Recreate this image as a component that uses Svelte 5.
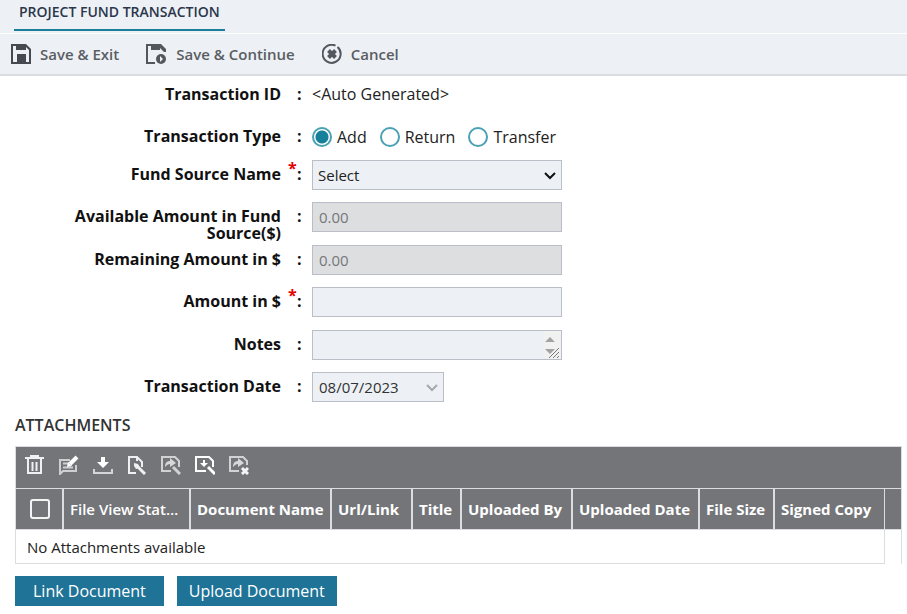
<script>
  let type = $state('Add');
  let fund = $state('Select');
  let amount = $state('');
  let notes = $state('');
  let date = $state('08/07/2023');
  const types = ['Add', 'Return', 'Transfer'];
  const columns = [
    { name: 'File View Stat…', width: 127, light: true },
    { name: 'Document Name', width: 141 },
    { name: 'Url/Link', width: 81 },
    { name: 'Title', width: 49 },
    { name: 'Uploaded By', width: 111 },
    { name: 'Uploaded Date', width: 127 },
    { name: 'File Size', width: 75 },
    { name: 'Signed Copy' }
  ];
</script>

{#snippet mark(required)}
  <span class="mark">
    <span class="star">{required ? '*' : ''}</span><span class="colon">:</span>
  </span>
{/snippet}

<div class="page">
  <header>
    <nav><a class="tab" href="#transaction">PROJECT FUND TRANSACTION</a></nav>
    <div class="actions">
      <button type="button">
        <svg width="20" height="20" viewBox="0 0 20 20">
          <path fill="#46494f" fill-rule="evenodd" d="M0 0h15l5 5v13h1v2H0zM2 2v16h4v-8h9v8h3V6l-3-3v3H5V2z" />
          <path fill="#46494f" fill-rule="evenodd" d="M6 10h8v9H6zM8 12v6h1v-3h3v3h1v-6z" />
        </svg>
        Save &amp; Exit
      </button>
      <button type="button">
        <svg width="21" height="20" viewBox="0 0 21 20">
          <path fill="#54575d" d="M0 0h15l5 5v3h-2L14 4v2H5V2H2v16h7v2H0z" />
          <circle cx="15" cy="15" r="5" fill="#54575d" />
          <path fill="#edf1f5" d="m14 12 3 3-3 3z" />
        </svg>
        Save &amp; Continue
      </button>
      <button type="button">
        <svg width="20" height="20" viewBox="0 0 20 20" fill="none" stroke="#54575d">
          <path stroke-width="2" d="M15.500 3a9 9 0 1 1-2-1.300" />
          <path stroke-width="4" d="m6.500 6.500 7 7m0-7-7 7" />
        </svg>
        Cancel
      </button>
    </div>
  </header>

  <main>
    <form>
      <div class="row">
        <span class="label">Transaction ID</span>{@render mark(false)}
        <span class="value">&lt;Auto Generated&gt;</span>
      </div>
      <div class="row short" role="radiogroup" aria-labelledby="type-label">
        <span class="label" id="type-label">Transaction Type</span>{@render mark(false)}
        <div class="radios">
          {#each types as t}
            <label><input type="radio" name="type" value={t} bind:group={type} />{t}</label>
          {/each}
        </div>
      </div>
      <div class="row">
        <label class="label" for="fund">Fund Source Name</label>{@render mark(true)}
        <div class="field">
          <select id="fund" bind:value={fund}><option>Select</option></select>
          <svg class="chevron" width="12" height="8" viewBox="0 0 12 8"><path d="m1 1 5 5 5-5" fill="none" stroke="#111" stroke-width="2" /></svg>
        </div>
      </div>
      <div class="row tall">
        <label class="label" for="available">Available Amount in Fund Source($)</label>{@render mark(false)}
        <div class="field"><input id="available" type="text" value="0.00" disabled /></div>
      </div>
      <div class="row">
        <label class="label" for="remaining">Remaining Amount in $</label>{@render mark(false)}
        <div class="field"><input id="remaining" type="text" value="0.00" disabled /></div>
      </div>
      <div class="row tall">
        <label class="label" for="amount">Amount in $</label>{@render mark(true)}
        <div class="field"><input id="amount" type="text" bind:value={amount} /></div>
      </div>
      <div class="row">
        <label class="label" for="notes">Notes</label>{@render mark(false)}
        <div class="field">
          <textarea id="notes" rows="1" bind:value={notes}></textarea>
          <svg class="scroll" width="17" height="28" viewBox="6 0 17 28">
            <path fill="#f1f1f2" d="M6 0h17v28H6z" />
            <path fill="#a3a3a3" d="m7 11 5-5 5 5zM7 18h10l-5 5z" />
            <path stroke="#f1f1f2" stroke-width="3" d="m11 28 10-10" />
            <path stroke="#777" d="m11 27 10-10m-6 10 6-6m-2 6 2-2" />
          </svg>
        </div>
      </div>
      <div class="row tall">
        <label class="label" for="date">Transaction Date</label>{@render mark(false)}
        <div class="field date">
          <input id="date" type="text" bind:value={date} />
          <svg class="chevron" width="12" height="8" viewBox="0 0 12 8"><path d="m1 1 5 5 5-5" fill="none" stroke="#a6a9ad" stroke-width="2" /></svg>
        </div>
      </div>
    </form>

    <section>
      <h2>ATTACHMENTS</h2>
      <div class="grid">
        <div class="tools">
          <button type="button" aria-label="Delete">
            <svg viewBox="0 0 20 20" fill="none" stroke="#f0f0f2" stroke-width="2">
              <path d="M0 3h19M6 3V1h7v2M3 4v14h13V4M7.500 7v9M11.500 7v9" />
            </svg>
          </button>
          <button type="button" aria-label="Edit">
            <svg viewBox="0 0 20 20" fill="none" stroke="#cfcfd3" stroke-width="2">
              <path d="M11 5H1v14l3-3h13v-6M4 8.500h6M4 12.500h10" />
              <path stroke="#fff" stroke-width="4" d="m11 9 7-7" /><path fill="#fff" stroke="none" d="m8 12 1-5 4 4z" />
            </svg>
          </button>
          <button type="button" aria-label="Download">
            <svg viewBox="0 0 20 20">
              <path fill="#fff" d="M8 2h4v5h4l-6 6-6-6h4z" /><path fill="none" stroke="#d5d5d8" stroke-width="2" d="M1 14v4h18v-4" />
            </svg>
          </button>
          <button type="button" aria-label="View document">
            <svg viewBox="0 0 20 20" fill="none" stroke="#f0f0f2" stroke-width="2">
              <path d="M9 18H2V2h8l5 5v5M10 2v4" /><path d="M7 8l4 1 2 4-4 1-2-3z" fill="#f0f0f2" stroke="none" /><path stroke-width="3" d="m10 11 8 8" />
            </svg>
          </button>
          <button type="button" aria-label="Share document">
            <svg viewBox="0 0 20 20" fill="none" stroke="#d2d2d5" stroke-width="2">
              <path d="M10 16H1V2h13l4 4v6" /><path fill="#d8d8db" stroke="none" d="M4 12c0-4 2-6 5-6V3l6 5-6 4v-3c-2 0-3 1-5 3z" /><path stroke-width="3" d="m12 12 7 7" />
            </svg>
          </button>
          <button type="button" aria-label="Check out document">
            <svg viewBox="0 0 20 20" fill="none" stroke="#fff" stroke-width="2">
              <path d="M11 16H1V2h13l4 4v6" /><path fill="#fff" stroke="none" d="M8 5h2v3h3l-4 4-4-4h3z" /><path stroke-width="3" d="m13 12 7 7" />
            </svg>
          </button>
          <button type="button" aria-label="Cancel sharing">
            <svg viewBox="0 0 20 20" fill="none" stroke="#d2d2d5" stroke-width="2">
              <path d="M10 16H1V2h13l4 4v4" /><path fill="#d8d8db" stroke="none" d="M4 12c0-4 2-6 5-6V3l6 5-6 4v-3c-2 0-3 1-5 3z" /><path stroke="#f4f4f5" stroke-width="3" d="m13 13 6 6m0-6-6 6" />
            </svg>
          </button>
        </div>
        <div class="tablewrap">
          <table>
            <thead>
              <tr>
                <th class="check" style:width="48px"><input type="checkbox" aria-label="Select all attachments" /></th>
                {#each columns as c}
                  <th class:light={c.light} style:width={c.width ? c.width + 'px' : null}>{c.name}</th>
                {/each}
              </tr>
            </thead>
            <tbody><tr><td colspan="9">No Attachments available</td></tr></tbody>
          </table>
          <div class="gutter"></div>
        </div>
      </div>
      <div class="buttons">
        <button type="button">Link Document</button>
        <button type="button">Upload Document</button>
      </div>
    </section>
  </main>
</div>

<style>
  :global(body) { background: #fff; }
  .page, button, input, select, textarea {
    font-family: "Open Sans", "Noto Sans", sans-serif;
    font-size: 16px;
  }
  .page { color: #222; overflow: hidden; }
  .page *, .page { box-sizing: border-box; }
  svg { display: block; flex: none; }

  header { background: #edf1f5; border-bottom: 2px solid #d9dce0; }
  nav { display: flex; padding-left: 14px; padding-bottom: 2px; border-bottom: 1px solid #fff; }
  .tab {
    padding: 2px 5px 7px;
    border-bottom: 2px solid #1b7f9c;
    color: #2b364a;
    font-size: 14px;
    font-weight: 600;
    line-height: 20px;
    text-decoration: none;
  }
  .actions { display: flex; gap: 27px; height: 40px; padding-left: 11px; }
  .actions button {
    display: flex;
    align-items: center;
    gap: 9px;
    padding: 0;
    border: 0;
    background: none;
    color: #5a5d63;
    font-size: 15px;
    font-weight: 600;
    line-height: 20px;
  }

  form { padding-top: 4px; }
  .row { display: grid; grid-template-columns: 281px 31px minmax(0, 1fr); min-height: 42px; }
  .tall { height: 43px; }
  .short { min-height: 38px; }
  .label {
    padding: 6px 0 0 60px;
    color: #111;
    font-weight: 700;
    line-height: 17px;
    text-align: right;
  }
  .mark { display: flex; padding-left: 7px; color: #111; font-weight: 700; line-height: 17px; }
  .star { width: 9px; color: #e60000; }
  .colon { padding-top: 6px; }
  .value { line-height: 28px; }
  .radios { display: flex; gap: 13px; height: 30px; }
  .radios label { display: flex; align-items: center; gap: 5px; }
  .radios input {
    appearance: none;
    width: 20px;
    height: 20px;
    margin: 0;
    border: 2px solid #4aa0b5;
    border-radius: 50%;
    background: #fff;
  }
  .radios input:checked { background: radial-gradient(circle, #16809a 6px, #fff 7px); }
  .field { position: relative; width: 250px; height: 30px; }
  .date { width: 132px; }
  .field input, select, textarea {
    display: block;
    width: 100%;
    height: 30px;
    margin: 0;
    padding: 0 6px;
    border: 1px solid #b9bec8;
    border-radius: 0;
    background: #edf1f5;
    color: #333;
    font-size: 15px;
  }
  select { appearance: none; padding: 0 5px; color: #222; }
  textarea { resize: none; overflow: hidden; }
  .field input:disabled { background: #dddee0; color: #74777b; }
  .chevron { position: absolute; right: 6px; top: 12px; pointer-events: none; }
  .scroll { position: absolute; right: 1px; top: 1px; pointer-events: none; }

  section { padding: 0 5px 8px 15px; }
  h2 { margin: 0; padding-bottom: 11px; color: #333; font-size: 16px; font-weight: 600; line-height: 20px; }
  .grid { border: 1px solid #dcdde0; border-bottom: 0; }
  .tools { display: flex; gap: 14px; height: 41px; padding: 8px 9px 0; background: #747579; }
  .tools button { width: 20px; height: 20px; padding: 0; border: 0; background: none; }
  .tools svg { width: 20px; height: 20px; }
  .tablewrap { display: flex; }
  table { flex: 1; width: 0; border-collapse: separate; border-spacing: 0; table-layout: fixed; }
  th {
    height: 42px;
    padding: 0 0 0 6px;
    border: solid #dcdde0;
    border-width: 1px 2px 1px 0;
    background: #747579;
    color: #fff;
    font-size: 15px;
    font-weight: 700;
    text-align: left;
    white-space: nowrap;
  }
  .light { font-weight: 600; }
  th:last-child { border-right-width: 1px; }
  .check input {
    appearance: none;
    display: block;
    width: 20px;
    height: 20px;
    margin: 0 0 0 8px;
    border: 2px solid #f4f4f5;
    border-radius: 3px;
  }
  td { height: 34px; padding: 0 11px; border: solid #dcdde0; border-width: 0 1px 1px 0; font-size: 15px; }
  .gutter {
    width: 16px;
    border-top: 1px solid #dcdde0;
    background: linear-gradient(#747579 40px, #dcdde0 40px, #dcdde0 41px, #fff 41px);
  }
  .buttons { display: flex; gap: 13px; margin-top: 12px; }
  .buttons button { height: 30px; padding: 0 12px; border: 0; background: #1f7397; color: #fff; }
  .buttons button:first-child { padding: 0 18px; }
</style>
